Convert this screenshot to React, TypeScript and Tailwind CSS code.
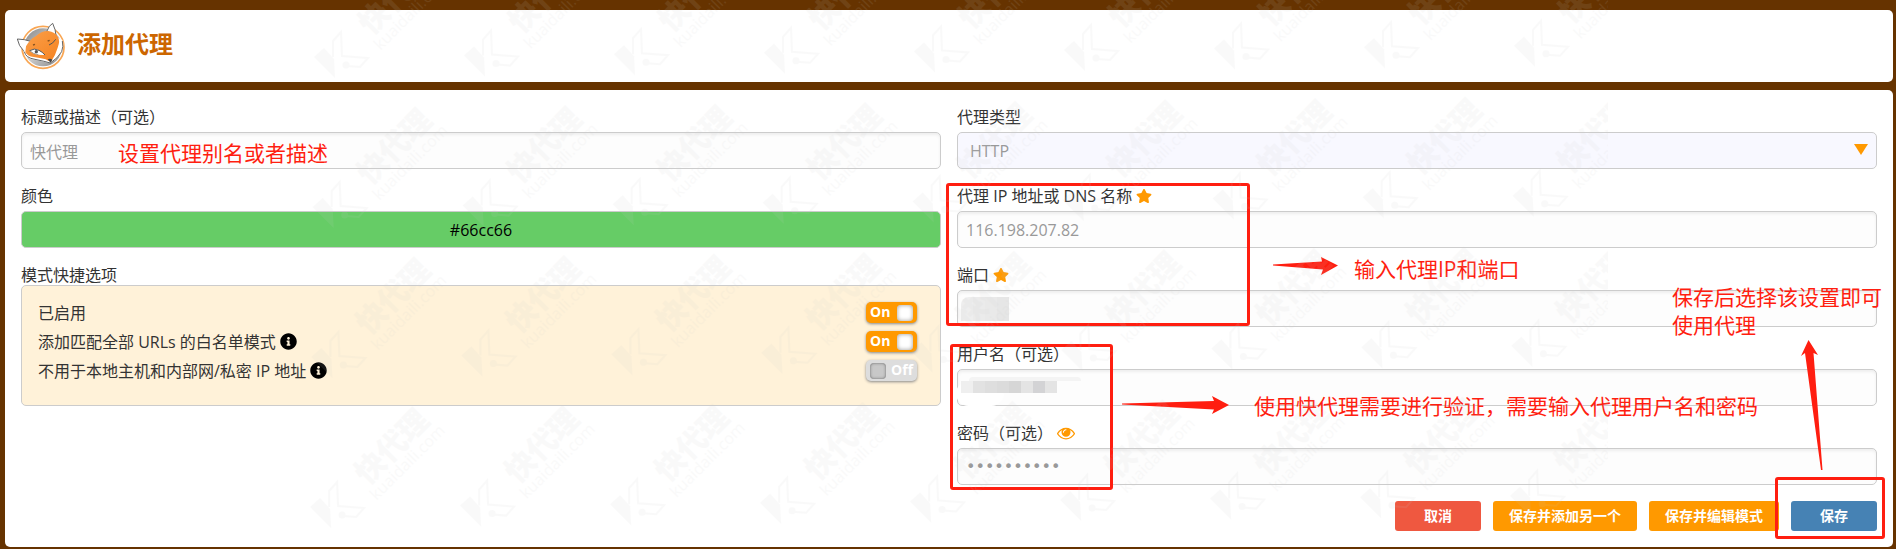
import { useState, type ReactNode } from "react";
import { FaInfoCircle, FaStar } from "react-icons/fa";

const inputClass =
  "block h-[37px] w-full rounded-[5px] border border-[#ccc] bg-[#fdfdfd] px-2 text-base text-[#999] shadow-[inset_0_2px_3px_#eee] outline-none";

const noteClass =
  "pointer-events-none absolute whitespace-nowrap text-[21px] leading-7 text-[#ff1e10]";

const frameClass =
  "pointer-events-none absolute rounded-[3px] border-3 border-[#ff1e10]";

const buttonClass =
  "h-[30px] rounded-[3px] px-4 text-sm font-bold text-white";

function FoxLogo() {
  return (
    <svg viewBox="0 0 156 150" className="h-[50px] w-[52px]" aria-hidden="true">
      <defs>
        <linearGradient id="disc" x1="0" y1="0" x2="1" y2="1">
          <stop offset="0" stopColor="#858585" />
          <stop offset="0.5" stopColor="#c9c9c9" />
          <stop offset="1" stopColor="#858585" />
        </linearGradient>
        <linearGradient id="fur" x1="0" y1="0" x2="1" y2="1">
          <stop offset="0" stopColor="#fba04a" />
          <stop offset="1" stopColor="#f58220" />
        </linearGradient>
      </defs>
      <circle cx="84" cy="79" r="63" fill="#fff" stroke="#f9a653" strokeWidth="5" />
      <circle cx="84" cy="79" r="57" fill="url(#disc)" />
      <path d="M94 34Q102 12 113 7Q122 24 124 50Z" fill="#fff" stroke="#666" strokeWidth="3" />
      <path d="M7 54Q28 54 50 62L28 92Q10 74 7 54Z" fill="#fff" stroke="#666" strokeWidth="3" />
      <path d="M26 86Q26 112 58 116Q88 123 106 126Q122 118 134 102Q148 84 144 60L124 46L40 64Z" fill="#fff" />
      <path
        d="M28 92Q32 111 60 115Q90 121 106 126Q128 112 140 92Q146 76 142 60"
        fill="none"
        stroke="#666"
        strokeWidth="3"
      />
      <path
        d="M33 76Q44 56 62 46Q80 29 100 30Q120 33 129 48Q136 60 128 80Q122 102 108 122Q100 120 92 115Q74 110 56 108Q38 106 31 94Z"
        fill="url(#fur)"
      />
      <path d="M44 89Q58 80 72 88Q82 93 90 102Q68 103 56 98Z" fill="#fff" />
      <path d="M44 89Q58 80 72 88Q82 93 90 102" fill="none" stroke="#555" strokeWidth="3" />
      <path d="M44 89Q54 99 70 101" fill="none" stroke="#777" strokeWidth="2" />
      <circle cx="64" cy="92" r="5" fill="#555" />
      <path d="M102 72Q114 68 122 55" fill="none" stroke="#555" strokeWidth="3" />
      <path d="M54 72L60 70M98 60L104 58" fill="none" stroke="#8a5320" strokeWidth="4" />
      <path d="M98 115Q106 111 112 116L107 125Z" fill="#444" />
    </svg>
  );
}

function EyeIcon() {
  return (
    <svg viewBox="0 0 1792 1792" className="size-[18px] fill-[#ff9900]" aria-hidden="true">
      <path d="M1664 960q-152-236-381-353 61 104 61 225 0 185-131.500 316.500t-316.500 131.500-316.500-131.500-131.500-316.500q0-121 61-225-229 117-381 353 133 205 333.500 326.500t434.500 121.500 434.500-121.500 333.500-326.500zm-720-384q0-20-14-34t-34-14q-125 0-214.500 89.500t-89.500 214.500q0 20 14 34t34 14 34-14 14-34q0-86 61-147t147-61q20 0 34-14t14-34zm848 384q0 34-20 69-140 230-376.500 368.500t-499.500 138.500-499.500-139-376.500-368q-20-35-20-69t20-69q140-229 376.500-368t499.500-139 499.500 139 376.500 368q20 35 20 69z" />
    </svg>
  );
}

function Watermark() {
  const rows = [0, 1, 2, 3];
  const cols = [0, 1, 2, 3, 4, 5, 6, 7, 8];
  return (
    <svg
      className="pointer-events-none absolute top-0 left-0 h-full w-[1608px] overflow-hidden opacity-10"
      aria-hidden="true"
    >
      {rows.map((row) =>
        cols.map((col) => (
          <g
            key={`${row}-${col}`}
            transform={`translate(${314 + col * 150 - row * 1.3} ${28 + row * 150 - col * 1.4})`}
            fill="#cdcdcd"
          >
            <path d="M0 29L10 20L20 31L21 50Z" />
            <path
              d="M19 29V13L27 4L28 28L54 30L46 39L33 38"
              fill="none"
              stroke="#cdcdcd"
              strokeWidth="2"
            />
            <circle cx="32" cy="37" r="3.500" />
            <text
              transform="translate(81 -32) rotate(-45)"
              textAnchor="middle"
              dominantBaseline="central"
              fontSize="30"
              fontWeight="900"
            >
              快代理
            </text>
            <text
              transform="translate(97 -16) rotate(-45)"
              textAnchor="middle"
              dominantBaseline="central"
              fontSize="16"
              fontWeight="500"
            >
              kuaidaili.com
            </text>
          </g>
        ))
      )}
    </svg>
  );
}

function Field({
  id,
  label,
  icon,
  children,
}: {
  id: string;
  label: string;
  icon?: ReactNode;
  children: ReactNode;
}) {
  return (
    <div className="relative">
      <label htmlFor={id} className="flex items-center gap-1 pb-0.5 leading-[26px]">
        {label}
        {icon}
      </label>
      {children}
    </div>
  );
}

function ToggleRow({
  id,
  label,
  info,
  initial,
}: {
  id: string;
  label: string;
  info?: boolean;
  initial: boolean;
}) {
  const [on, setOn] = useState(initial);
  return (
    <div className="flex h-[29px] items-center justify-between">
      <label htmlFor={id} className="flex items-center gap-1">
        {label}
        {info && <FaInfoCircle className="size-[17px] text-black" />}
      </label>
      <label
        className={
          on
            ? "flex h-[21px] w-[51px] items-center justify-between rounded-[5px] bg-[#ff9900] px-1 shadow-[0_1px_3px_#888]"
            : "flex h-[21px] w-[51px] flex-row-reverse items-center justify-between rounded-[5px] bg-[#ddd] px-1 shadow-[0_1px_3px_#888]"
        }
      >
        <span className="pb-0.5 text-sm leading-4 font-bold text-white">{on ? "On" : "Off"}</span>
        <input
          id={id}
          type="checkbox"
          checked={on}
          onChange={() => setOn(!on)}
          className="size-4 appearance-none rounded-[4px] bg-[#c8c8c8] shadow-[inset_0_0_3px_#666] checked:bg-white checked:shadow-[inset_0_0_4px_#999]"
        />
      </label>
    </div>
  );
}

export default function App() {
  const star = <FaStar className="size-4 text-[#ff9900]" />;

  return (
    <div className="relative min-h-screen bg-[#663300] pt-2.5 pr-[3px] pb-0.5 pl-[5px] font-['Open_Sans','Noto_Sans_CJK_SC',sans-serif] text-base text-[#333]">
      <header className="flex h-[72px] items-center rounded-[5px] bg-white pl-2.5">
        <FoxLogo />
        <h1 className="ml-2.5 pb-1 text-2xl font-bold text-[#cc6600]">添加代理</h1>
      </header>

      <main className="mt-2 rounded-[5px] bg-white px-4 pt-3.5 pb-4">
        <div className="grid grid-cols-2 gap-4">
          <div className="flex flex-col gap-3.5">
            <Field id="title" label="标题或描述（可选）">
              <input id="title" className={inputClass} defaultValue="快代理" />
              <p className={`${noteClass} bottom-0.5 left-[97px]`}>设置代理别名或者描述</p>
            </Field>
            <Field id="color" label="颜色">
              <input
                id="color"
                className="block h-[37px] w-full rounded-[5px] border border-[#ccc] bg-[#66cc66] text-center text-base text-black outline-none"
                defaultValue="#66cc66"
              />
            </Field>
            <section>
              <h2 className="pt-[3px] leading-5">模式快捷选项</h2>
              <div className="h-[121px] rounded-[5px] border border-[#ccc] bg-[#fff2d9] pt-3 pr-[23px] pl-4">
                <ToggleRow id="enabled" label="已启用" initial={true} />
                <ToggleRow id="whitelist" label="添加匹配全部 URLs 的白名单模式" info initial={true} />
                <ToggleRow id="blacklist" label="不用于本地主机和内部网/私密 IP 地址" info initial={false} />
              </div>
            </section>
          </div>

          <div className="relative flex flex-col gap-3.5">
            <Field id="type" label="代理类型">
              <select
                id="type"
                className="block h-[37px] w-full appearance-none rounded-[5px] border border-[#ccc] bg-[#f8f8ff] px-3 text-base text-[#999] outline-none"
              >
                <option>HTTP</option>
              </select>
              <svg
                viewBox="0 0 14 11"
                className="pointer-events-none absolute right-[9px] bottom-3.5 h-[11px] w-3.5 fill-[#ff9900]"
                aria-hidden="true"
              >
                <path d="M0 0H14L7 11Z" />
              </svg>
            </Field>
            <Field id="host" label="代理 IP 地址或 DNS 名称" icon={star}>
              <input id="host" className={inputClass} defaultValue="116.198.207.82" />
            </Field>
            <Field id="port" label="端口" icon={star}>
              <input id="port" className={inputClass} />
              <div className="pointer-events-none absolute bottom-1.5 left-1 flex h-6 w-12 rounded-tl-lg bg-[#eee]">
                <span className="w-3" />
                <span className="w-3 bg-[#ebebeb]" />
                <span className="w-3 bg-[#e9e9e9]" />
                <span className="w-3 bg-[#e6e6e6]" />
              </div>
            </Field>
            <Field id="user" label="用户名（可选）">
              <input id="user" className={inputClass} />
              {/* masked user name */}
              <div className="pointer-events-none absolute bottom-0 -left-px h-[25px] w-12 rounded-full bg-white" />
              <div className="pointer-events-none absolute bottom-[25px] left-3 h-1 w-28 rounded-t-full bg-[#f4f4f4]" />
              <div className="pointer-events-none absolute bottom-[13px] left-1 flex h-3">
                <span className="w-3 bg-[#efefef]" />
                <span className="w-3 bg-[#e2e2e2]" />
                <span className="w-3 bg-[#dedede]" />
                <span className="w-3 bg-[#dbdbdb]" />
                <span className="w-3 bg-[#d6d6d6]" />
                <span className="w-3 bg-[#e4e4e4]" />
                <span className="w-3 bg-[#d3d3d5]" />
                <span className="w-3 bg-[#e4e4e4]" />
              </div>
            </Field>
            <Field id="password" label="密码（可选）" icon={<EyeIcon />}>
              <input
                id="password"
                type="password"
                className={`${inputClass} font-['DejaVu_Sans',sans-serif]`}
                defaultValue="kuaidaili0"
              />
            </Field>

            <div className={`${frameClass} top-[79px] -left-[11px] h-[143px] w-[304px]`} />
            <div className={`${frameClass} top-[240px] -left-[7px] h-[146px] w-[163px]`} />
            <svg
              viewBox="0 0 65 18"
              className="pointer-events-none absolute top-[153px] left-[316px] h-[18px] w-[65px] fill-[#ff1e10]"
              aria-hidden="true"
            >
              <path d="M0 7.500L49 4.500L48 0L65 8.500L48 18L50 12.500L0 8.500Z" />
            </svg>
            <p className={`${noteClass} top-[151px] left-[397px]`}>输入代理IP和端口</p>
            <svg
              viewBox="0 0 107 18"
              className="pointer-events-none absolute top-[292px] left-[165px] h-[18px] w-[107px] fill-[#ff1e10]"
              aria-hidden="true"
            >
              <path d="M0 7.500L92 5L90 0L107 9L90 18L92 13.500L0 8.500Z" />
            </svg>
            <p className={`${noteClass} top-[288px] left-[297px]`}>
              使用快代理需要进行验证，需要输入代理用户名和密码
            </p>
            <p className={`${noteClass} top-[179px] -right-[5px]`}>
              保存后选择该设置即可
              <br />
              使用代理
            </p>
          </div>
        </div>

        <footer className="relative mt-4 flex justify-end gap-3">
          <button type="button" className={`${buttonClass} w-[86px] bg-[#ef5840]`}>
            取消
          </button>
          <button type="button" className={`${buttonClass} bg-[#ff9900]`}>
            保存并添加另一个
          </button>
          <button type="button" className={`${buttonClass} bg-[#ff9900]`}>
            保存并编辑模式
          </button>
          <button type="button" className={`${buttonClass} w-[86px] bg-[#4682b4]`}>
            保存
          </button>
          <div className={`${frameClass} -top-6 -right-2 h-[62px] w-[110px]`} />
          <svg
            viewBox="0 0 22 131"
            className="pointer-events-none absolute -top-[161px] right-[54px] h-[131px] w-[22px] fill-[#ff1e10]"
            aria-hidden="true"
          >
            <path d="M7.500 0L17 15L12.500 13L21.500 130H20L4 13L0 16Z" />
          </svg>
        </footer>
      </main>

      <Watermark />
    </div>
  );
}
